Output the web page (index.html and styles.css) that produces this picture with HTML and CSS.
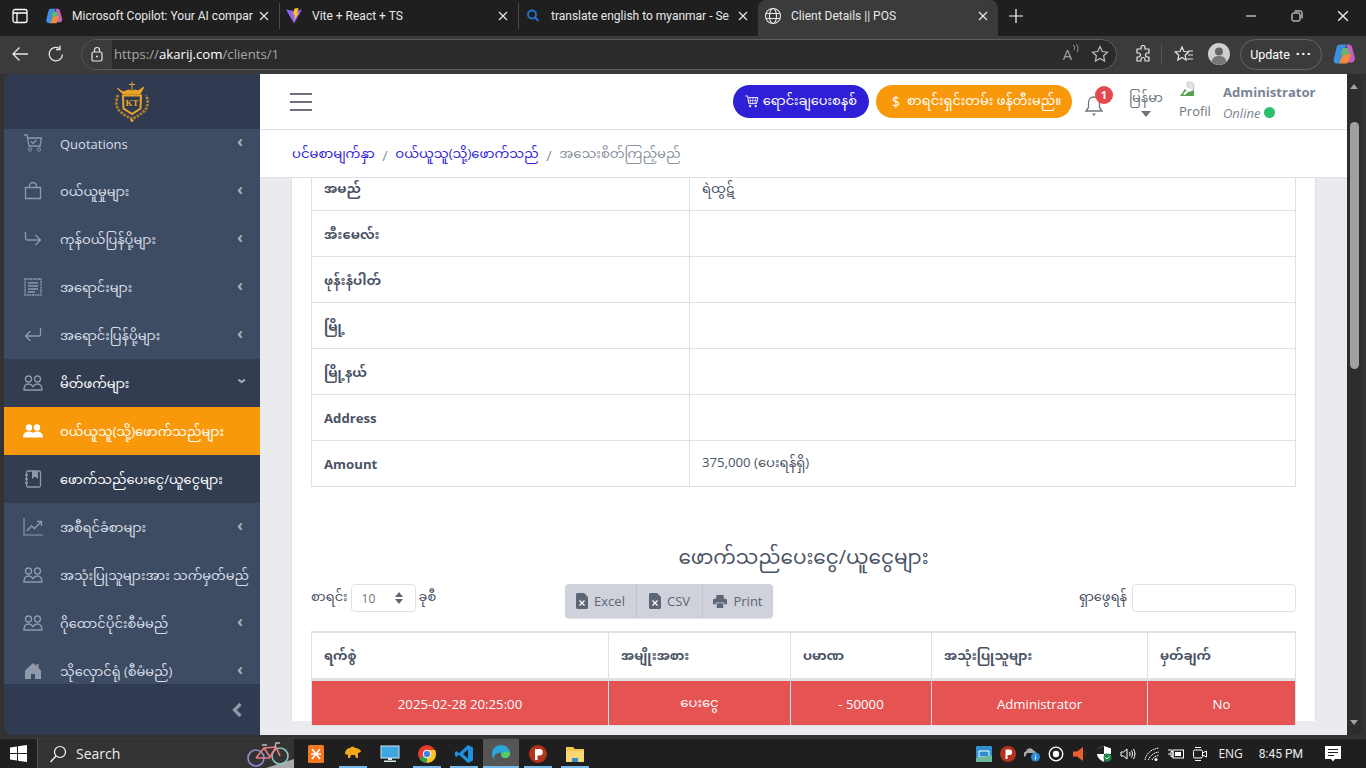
FILE: index.html
```html
<!DOCTYPE html>
<html lang="en">
<head>
    <meta charset="UTF-8">
    <title>Client Details || POS</title>
    <link rel="stylesheet" href="styles.css">
</head>

<body>
    <svg class="defs" width="0" height="0">
        <symbol id="ic-people" viewBox="0 0 20 16">
            <circle cx="5.5" cy="4" r="3" fill="none" stroke="currentColor" stroke-width="1.4"/>
            <circle cx="14.5" cy="4" r="3" fill="none" stroke="currentColor" stroke-width="1.4"/>
            <path d="M1 15c0-4 2-6 4.5-6S9 10 10 11.500C11 10 12 9 14.500 9S19 11 19 15z" fill="none" stroke="currentColor" stroke-width="1.4"/>
        </symbol>
        <symbol id="ic-close" viewBox="0 0 10 10">
            <path d="M1 1l8 8M9 1l-8 8" fill="none" stroke="currentColor" stroke-width="1.2"/>
        </symbol>
        <symbol id="ic-copilot" viewBox="0 0 20 20">
            <path d="M6 2h6l-3 9-2 7H4C2 18 1 16 1.500 14L4 4c.3-1.200 1-2 2-2z" fill="#3b8fe0"/>
            <path d="M12 2h2c1.500 0 2.300 1 2.600 2l2.400 9c.4 2-.6 4-2.600 4h-3l2-6-2-1z" fill="#c85fc0"/>
            <path d="M6 18l3-8h7l-2 6c-.4 1.200-1.200 2-2.500 2z" fill="#f08a3c"/>
            <path d="M7 11l2-6h4l2 5z" fill="#63b46c"/>
        </symbol>
        <symbol id="ic-file" viewBox="0 0 12 16">
            <path d="M0 1.500C0 .7.700 0 1.500 0H8l4 4v10.500c0 .8-.7 1.500-1.500 1.500h-9C.7 16 0 15.300 0 14.500z" fill="currentColor"/>
            <path d="M3.500 7.500l5 5M8.500 7.500l-5 5" stroke="#fff" stroke-width="1.200"/>
        </symbol>
    </svg>

    <div class="tab-strip">
        <svg class="strip-toggle" width="16" height="16" viewBox="0 0 16 16"><rect x="1" y="1.500" width="14" height="13" rx="2" fill="none" stroke="#fff" stroke-width="1.300"/><path d="M1 5h14M5 5v9" stroke="#fff" stroke-width="1.300"/></svg>
        <div class="tab tab-sep">
            <svg class="tab-icon" width="18" height="18"><use href="#ic-copilot"/></svg>
            <span class="tab-title">Microsoft Copilot: Your AI compar</span>
            <svg class="tab-close" width="10" height="10"><use href="#ic-close"/></svg>
        </div>
        <div class="tab tab-sep">
            <svg class="tab-icon" width="18" height="18" viewBox="0 0 18 18"><path d="M1 2.500l8 14 8-14-8 1.500z" fill="#8f63f0"/><path d="M9.500 1.500l4-.5-1.500 5 2-.5-5 8 1-6-2 .5z" fill="#ffc517"/></svg>
            <span class="tab-title">Vite + React + TS</span>
            <svg class="tab-close" width="10" height="10"><use href="#ic-close"/></svg>
        </div>
        <div class="tab tab-narrow">
            <svg class="tab-icon" width="18" height="18" viewBox="0 0 18 18"><circle cx="8" cy="7.500" r="4" fill="none" stroke="#1f78d1" stroke-width="1.800"/><path d="M11 10.500l3.500 3.500" stroke="#1f78d1" stroke-width="1.800"/></svg>
            <span class="tab-title">translate english to myanmar - Se</span>
            <svg class="tab-close" width="10" height="10"><use href="#ic-close"/></svg>
        </div>
        <div class="tab tab-active">
            <svg class="tab-icon" width="18" height="18" viewBox="0 0 18 18"><g fill="none" stroke="#e6e6e6" stroke-width="1.100"><circle cx="9" cy="9" r="7.500"/><ellipse cx="9" cy="9" rx="3.500" ry="7.500"/><path d="M2 6.500h14M2 11.500h14"/></g></svg>
            <span class="tab-title">Client Details || POS</span>
            <svg class="tab-close" width="10" height="10"><use href="#ic-close"/></svg>
        </div>
        <svg class="new-tab" width="16" height="16" viewBox="0 0 16 16"><path d="M8 1v14M1 8h14" stroke="#fff" stroke-width="1.200"/></svg>
        <div class="win-buttons">
            <svg width="12" height="12" viewBox="0 0 12 12"><path d="M1 6h10" stroke="#fff"/></svg>
            <svg width="12" height="12" viewBox="0 0 12 12"><rect x="1" y="3" width="8" height="8" rx="1.500" fill="none" stroke="#fff"/><path d="M3.500 1H9.500C10.500 1 11 1.500 11 2.500V8.500" fill="none" stroke="#fff"/></svg>
            <svg width="12" height="12"><use href="#ic-close"/></svg>
        </div>
    </div>

    <div class="toolbar">
        <svg class="tool-back" width="18" height="18" viewBox="0 0 18 18"><path d="M17 9H2M8.500 2.500L2 9l6.500 6.500" fill="none" stroke="#e8e8e8" stroke-width="1.300"/></svg>
        <svg class="tool-reload" width="18" height="18" viewBox="0 0 18 18"><path d="M15.500 9.500A6.700 6.700 0 1 1 12.500 3.500" fill="none" stroke="#e8e8e8" stroke-width="1.300"/><path d="M13 .5v4H9" fill="none" stroke="#e8e8e8" stroke-width="1.300"/></svg>
        <div class="url-box">
            <span class="lock-wrap">
                <svg width="14" height="16" viewBox="0 0 14 16"><rect x="2" y="6" width="10" height="9" rx="1.500" fill="none" stroke="#e8e8e8" stroke-width="1.200"/><path d="M4.500 6V4a2.500 2.500 0 0 1 5 0v2" fill="none" stroke="#e8e8e8" stroke-width="1.200"/><circle cx="7" cy="10.500" r="1" fill="#e8e8e8"/></svg>
            </span>
            <span class="url-text">https://<b>akarij.com</b>/clients/1</span>
            <span class="url-read">A<svg width="7" height="10" viewBox="0 0 7 10"><path d="M1 1c2 1 2 3 1 5M4 0c2.500 2 2.500 5 1 8" fill="none" stroke="#9a9a9a"/></svg></span>
            <svg class="url-star" width="18" height="18" viewBox="0 0 18 18"><path d="M9 1.500l2.300 5 5.200.6-3.900 3.600 1 5.300L9 13.400 4.400 16l1-5.300L1.500 7.100l5.200-.6z" fill="none" stroke="#bdbdbd" stroke-width="1.200"/></svg>
        </div>
        <svg class="tool-ext" width="18" height="18" viewBox="0 0 18 18"><path d="M7 2.500a2 2 0 0 1 4 0V4h4v4h-1.500a2 2 0 0 0 0 4H15v4h-4v-1.500a2 2 0 0 0-4 0V16H3v-4h1.500a2 2 0 0 0 0-4H3V4h4z" fill="none" stroke="#e8e8e8" stroke-width="1.200" stroke-linejoin="round"/></svg>
        <span class="tool-sep"></span>
        <svg class="tool-favs" width="20" height="18" viewBox="0 0 20 18"><path d="M8 2l2 4.500 4.700.5-3.500 3.200.9 4.800L8 12.500 3.900 15l.9-4.800L1.300 7 6 6.500z" fill="none" stroke="#e8e8e8" stroke-width="1.200"/><path d="M14 6h5M14 10h5M13 14h6" stroke="#e8e8e8" stroke-width="1.200"/></svg>
        <svg class="tool-avatar" width="22" height="22" viewBox="0 0 22 22"><circle cx="11" cy="11" r="11" fill="#cfcfcf"/><circle cx="11" cy="8.500" r="4" fill="#666"/><path d="M3.500 19c1-5 4-6 7.500-6s6.500 1 7.500 6a11 11 0 0 1-15 0z" fill="#777"/></svg>
        <div class="update-pill">Update<span class="update-dots">···</span></div>
        <svg class="tool-copilot" width="24" height="24"><use href="#ic-copilot"/></svg>
    </div>

    <div class="window">
        <aside class="sidebar">
            <div class="brand">
                <svg width="36" height="42" viewBox="0 0 36 42">
                    <path d="M18 1v8M15 3.500h6M3 7l6 4 3-1 3-1 3 1 3-1 3 1 6-4-4 7H9z" fill="#eda425" stroke="#eda425"/>
                    <path d="M9 14.500h18l-.5 13L18 33l-8.500-5.500z" fill="#2f3a52" stroke="#eda425" stroke-width="2"/>
                    <text x="18" y="25" class="brand-text">KT</text>
                    <path d="M4 14c-3 7-2 14 4 18 3 2.500 6 4 10 6 4-2 7-3.500 10-6 6-4 7-11 4-18" fill="none" stroke="#b8822a" stroke-width="2.600" stroke-dasharray="2.500 1.200"/>
                    <circle cx="18" cy="39.500" r="1.500" fill="#eda425"/>
                </svg>
            </div>
            <nav class="side-nav">
                <ul class="nav-list">
                    <li class="nav-item">
                        <svg class="nav-icon" width="20" height="18" viewBox="0 0 20 18"><path d="M1 1h3l2 11h11l1.500-8H5" fill="none" stroke="currentColor" stroke-width="1.300"/><path d="M8 7.500l2 2 3.500-3.500" fill="none" stroke="currentColor" stroke-width="1.300"/><circle cx="7" cy="15.500" r="1.600" fill="none" stroke="currentColor"/><circle cx="16" cy="15.500" r="1.600" fill="none" stroke="currentColor"/></svg>
                        <span class="nav-label nav-label-en">Quotations</span><span class="nav-arrow">‹</span>
                    </li>
                    <li class="nav-item">
                        <svg class="nav-icon" width="18" height="18" viewBox="0 0 18 18"><path d="M1.500 5.500h15v11h-15z" fill="none" stroke="currentColor" stroke-width="1.300"/><path d="M5.500 5.500V4a3.500 3.500 0 0 1 7 0v1.500" fill="none" stroke="currentColor" stroke-width="1.300"/></svg>
                        <span class="nav-label">ဝယ်ယူမှုများ</span><span class="nav-arrow">‹</span>
                    </li>
                    <li class="nav-item">
                        <svg class="nav-icon" width="18" height="16" viewBox="0 0 18 16"><path d="M1.500 1v6.500c0 1 .5 1.500 1.500 1.500h13M11.500 4l5 5-5 5" fill="none" stroke="currentColor" stroke-width="1.300"/></svg>
                        <span class="nav-label">ကုန်ဝယ်ပြန်ပို့များ</span><span class="nav-arrow">‹</span>
                    </li>
                    <li class="nav-item">
                        <svg class="nav-icon" width="18" height="18" viewBox="0 0 18 18"><rect x="1" y="1" width="16" height="16" fill="none" stroke="currentColor" stroke-width="1.300" stroke-dasharray="2 .6"/><path d="M4 5h10M4 8h10M4 11h10M4 14h7" stroke="currentColor" stroke-width="1.400"/></svg>
                        <span class="nav-label">အရောင်းများ</span><span class="nav-arrow">‹</span>
                    </li>
                    <li class="nav-item">
                        <svg class="nav-icon" width="18" height="16" viewBox="0 0 18 16"><path d="M16.500 1v6.500c0 1-.5 1.500-1.500 1.500H2M6.500 4l-5 5 5 5" fill="none" stroke="currentColor" stroke-width="1.300"/></svg>
                        <span class="nav-label">အရောင်းပြန်ပို့များ</span><span class="nav-arrow">‹</span>
                    </li>
                    <li class="nav-item nav-open">
                        <svg class="nav-icon" width="20" height="16"><use href="#ic-people"/></svg>
                        <span class="nav-label">မိတ်ဖက်များ</span><span class="nav-arrow nav-arrow-down">‹</span>
                    </li>
                    <li class="nav-item nav-active">
                        <svg class="nav-icon" width="20" height="14" viewBox="0 0 20 14"><circle cx="6" cy="3.500" r="3.200" fill="#fff"/><circle cx="14" cy="3.500" r="3.200" fill="#fff"/><path d="M0 13.500c0-4 2.500-6 6-6 1.500 0 3 .5 4 1.500 1-1 2.500-1.500 4-1.500 3.500 0 6 2 6 6z" fill="#fff"/></svg>
                        <span class="nav-label">ဝယ်ယူသူ(သို့)ဖောက်သည်များ</span>
                    </li>
                    <li class="nav-item nav-open nav-sub">
                        <svg class="nav-icon" width="18" height="18" viewBox="0 0 18 18"><rect x="2.500" y="1" width="14" height="16" rx="1.500" fill="none" stroke="currentColor" stroke-width="1.300"/><path d="M8 1h6v8l-3-2.500L8 9z" fill="currentColor"/><path d="M1 5h3M1 9h3M1 13h3" stroke="currentColor" stroke-width="1.300"/></svg>
                        <span class="nav-label">ဖောက်သည်ပေးငွေ/ယူငွေများ</span>
                    </li>
                    <li class="nav-item">
                        <svg class="nav-icon" width="20" height="18" viewBox="0 0 20 18"><path d="M1 0v17h19" fill="none" stroke="currentColor" stroke-width="1.200"/><path d="M4 13l4.500-5 3 2.500L18 4M14 3.500h4.500V8" fill="none" stroke="currentColor" stroke-width="1.300"/></svg>
                        <span class="nav-label">အစီရင်ခံစာများ</span><span class="nav-arrow">‹</span>
                    </li>
                    <li class="nav-item">
                        <svg class="nav-icon" width="20" height="16"><use href="#ic-people"/></svg>
                        <span class="nav-label">အသုံးပြုသူများအား သက်မှတ်မည်</span>
                    </li>
                    <li class="nav-item">
                        <svg class="nav-icon" width="20" height="16"><use href="#ic-people"/></svg>
                        <span class="nav-label">ဂိုထောင်ပိုင်းစီမံမည်</span><span class="nav-arrow">‹</span>
                    </li>
                    <li class="nav-item">
                        <svg class="nav-icon" width="18" height="16" viewBox="0 0 18 16"><path d="M9 0L1 7.500v8.500h6v-5h4v5h6V7.500L14.500 5V1h-2v2z" fill="currentColor"/></svg>
                        <span class="nav-label">သိုလှောင်ရုံ (စီမံမည်)</span><span class="nav-arrow">‹</span>
                    </li>
                </ul>
            </nav>
            <div class="side-foot">
                <svg width="12" height="16" viewBox="0 0 12 16"><path d="M9.500 2L3.500 8l6 6" fill="none" stroke="#8e97a6" stroke-width="3.200"/></svg>
            </div>
        </aside>

        <main class="main">
            <header class="top-bar">
                <div class="burger"><span></span><span></span><span></span></div>
                <div class="top-right">
                    <a class="pill pill-blue">
                        <svg width="16" height="15" viewBox="0 0 16 15"><path d="M.5 1h2.500l1.500 9h9l1.500-7H4" fill="none" stroke="#fff" stroke-width="1.100"/><path d="M6 3v7M9 3v7M12 3v7M4 6.500h10" stroke="#fff" stroke-width=".7"/><circle cx="6" cy="13" r="1.300" fill="#fff"/><circle cx="12.500" cy="13" r="1.300" fill="#fff"/></svg>
                        ရောင်းချပေးစနစ်
                    </a>
                    <a class="pill pill-orange"><span class="dollar">$</span>စာရင်းရှင်းတမ်း ဖန်တီးမည်။</a>
                    <div class="bell">
                        <svg width="18" height="22" viewBox="0 0 18 22"><path d="M9 2c3.500 0 5.500 2.500 5.500 6v4.500L17 16H1l2.500-3.500V8C3.500 4.500 5.500 2 9 2z" fill="none" stroke="#6c757d" stroke-width="1.300"/><path d="M7 18.500h4L9 21z" fill="#6c757d"/></svg>
                        <span class="bell-badge">1</span>
                    </div>
                    <div class="lang">မြန်မာ<span class="lang-caret"></span></div>
                    <div class="profile-img">
                        <svg width="16" height="17" viewBox="0 0 16 17"><path d="M8 1h5l2 2v6L8 6z" fill="#dfe3e6" stroke="#b5bcc2" stroke-width=".6"/><path d="M1 15l5-7 4 3 5-2v6z" fill="#56a04f"/><path d="M4 13l6-6 2 1-6 6z" fill="#fff"/></svg>
                        <span class="profile-alt">Profil</span>
                    </div>
                    <div class="user-box">
                        <b class="user-name">Administrator</b>
                        <span class="user-status">Online<i class="online-dot"></i></span>
                    </div>
                </div>
            </header>
            <div class="crumbs">
                <a>ပင်မစာမျက်နှာ</a><span class="crumb-sep">/</span><a>ဝယ်ယူသူ(သို့)ဖောက်သည်</a><span class="crumb-sep">/</span><span class="crumb-now">အသေးစိတ်ကြည့်မည်</span>
            </div>
            <div class="content">
                <section class="card">
                    <table class="info-table">
                        <tr><th>အမည်</th><td>ရဲထွဋ်</td></tr>
                        <tr><th>အီးမေလ်း</th><td></td></tr>
                        <tr><th>ဖုန်းနံပါတ်</th><td></td></tr>
                        <tr><th>မြို့</th><td></td></tr>
                        <tr><th>မြို့နယ်</th><td></td></tr>
                        <tr class="row-en"><th>Address</th><td></td></tr>
                        <tr class="row-en"><th>Amount</th><td>375,000 (ပေးရန်ရှိ)</td></tr>
                    </table>

                    <h2 class="section-title">ဖောက်သည်ပေးငွေ/ယူငွေများ</h2>

                    <div class="dt-controls">
                        <div class="dt-length">
                            စာရင်း
                            <span class="dt-select">10
                                <svg width="8" height="12" viewBox="0 0 8 12"><path d="M4 0l4 5H0zM4 12L0 7h8z" fill="#5f6873"/></svg>
                            </span>
                            ခုစီ
                        </div>
                        <div class="dt-buttons">
                            <span class="dt-btn btn-excel"><svg width="12" height="16"><use href="#ic-file"/></svg>Excel</span>
                            <span class="dt-btn btn-csv"><svg width="12" height="16"><use href="#ic-file"/></svg>CSV</span>
                            <span class="dt-btn btn-print"><svg width="14" height="13" viewBox="0 0 15 14"><path d="M3.500 4V0h8v4zM0 5.500C0 4.700.7 4 1.500 4h12c.8 0 1.500.7 1.500 1.500V10h-3V8H3v2H0zM4 9h7v5H4z" fill="currentColor"/></svg>Print</span>
                        </div>
                        <div class="dt-search">ရှာဖွေရန်<span class="dt-input"></span></div>
                    </div>

                    <table class="tx-table">
                        <thead>
                            <tr>
                                <th class="col-date">ရက်စွဲ</th>
                                <th class="col-type">အမျိုးအစား</th>
                                <th class="col-amount">ပမာဏ</th>
                                <th class="col-user">အသုံးပြုသူများ</th>
                                <th>မှတ်ချက်</th>
                            </tr>
                        </thead>
                        <tbody>
                            <tr class="row-red">
                                <td>2025-02-28 20:25:00</td>
                                <td>ပေးငွေ</td>
                                <td>- 50000</td>
                                <td>Administrator</td>
                                <td>No</td>
                            </tr>
                        </tbody>
                    </table>
                </section>
            </div>
        </main>

        <div class="page-scroll">
            <span class="scroll-up"></span>
            <span class="scroll-thumb"></span>
            <span class="scroll-down"></span>
        </div>
    </div>

    <footer class="taskbar">
        <svg class="start" width="17" height="17" viewBox="0 0 17 17"><path d="M0 2.500L7 1.500v6.500H0zM8 1.300L17 0v8H8zM0 9h7v6.500L0 14.500zM8 9h9v8l-9-1.300z" fill="#fff"/></svg>
        <div class="task-search">
            <svg width="18" height="18" viewBox="0 0 18 18"><circle cx="11" cy="7" r="5.500" fill="none" stroke="#fff" stroke-width="1.200"/><path d="M7 11l-5.500 6" stroke="#fff" stroke-width="1.200"/></svg>
            <span>Search</span>
            <svg class="bike" width="50" height="27" viewBox="0 0 50 27">
                <path d="M22 27l28-9v9z" fill="#a9a9a9"/>
                <circle cx="12" cy="17" r="8" fill="none" stroke="#8c8fd0" stroke-width="1.600"/>
                <circle cx="36" cy="15" r="8" fill="none" stroke="#8cc8c0" stroke-width="1.600"/>
                <path d="M12 17l8-10 12-1 4 9M20 7l6 9 6-10M12 17h14" fill="none" stroke="#e87f86" stroke-width="1.600"/>
                <path d="M18 4h5M31 6l1-4h4" fill="none" stroke="#bbb" stroke-width="1.400"/>
            </svg>
        </div>
        <div class="task-apps">
            <span class="app"><svg width="16" height="18" viewBox="0 0 16 18"><rect width="16" height="18" rx="1.500" fill="#f5781f"/><path d="M4 4l8 10M12 4L4 14M3 9h10" stroke="#fff" stroke-width="1.600"/></svg></span>
            <span class="app app-on"><svg width="18" height="16" viewBox="0 0 18 16"><path d="M1 8c0-3 2-6 5-6 1-1.500 4-2 5 0 3 0 6 2 6 4l-3 1v5h-2l-1-3H7l-1 3H4V9z" fill="#f2a71c"/></svg></span>
            <span class="app"><svg width="20" height="18" viewBox="0 0 20 18"><rect x="1" y="1" width="18" height="12" fill="#3da8e0" stroke="#cfe8f5"/><path d="M8 13h4v2H8zM4 15.500h12V17H4z" fill="#d6e6ee"/></svg></span>
            <span class="app app-on"><svg width="18" height="18" viewBox="0 0 18 18"><circle cx="9" cy="9" r="9" fill="#e33b2e"/><path d="M9 9L1.500 13.500A9 9 0 0 0 9 18z" fill="#33a04f"/><path d="M9 9v9a9 9 0 0 0 8-13H9z" fill="#f9c41b"/><circle cx="9" cy="9" r="3.800" fill="#3f83ea" stroke="#fff"/></svg></span>
            <span class="app app-on"><svg width="18" height="18" viewBox="0 0 18 18"><path d="M13 0l5 2.500v13L13 18 4 9.800 1.500 12 0 11V7l1.500-1L4 8.200z" fill="#1f8fe0"/><path d="M13 4.500L8 9l5 4.500z" fill="#1e1e1e"/></svg></span>
            <span class="app app-on app-active"><svg width="20" height="20" viewBox="0 0 20 20"><path d="M10 1c5 0 9 3.500 9 8.500 0 2.500-2 4.500-5 4.500-2.500 0-4-1.500-4-3 0-1 .5-1.500 1-2-3-1-8 1-8 4.500C3 17 6 19 10 19 5 19 1 15 1 10S5 1 10 1z" fill="#29a7d8"/><path d="M19 9.500c0 2.500-2 4.500-5 4.500-2.500 0-4-1.500-4-3 0-1 .5-1.500 1-2 2-1 8-3 8 .5z" fill="#59c96a"/></svg></span>
            <span class="app app-on"><svg width="18" height="18" viewBox="0 0 18 18"><circle cx="9" cy="9" r="9" fill="#b5321f"/><path d="M6 15V4h4.500a3.200 3.200 0 0 1 0 6.500H8.500V15z" fill="#fff"/></svg></span>
            <span class="app app-on"><svg width="18" height="16" viewBox="0 0 18 16"><path d="M0 1h7l2 2h9v4H0z" fill="#f4c64e"/><rect y="5" width="18" height="11" fill="#f8d775"/><path d="M6 16v-4h6v4z" fill="#2f8fd0"/></svg></span>
        </div>
        <div class="tray">
            <svg width="16" height="16" viewBox="0 0 16 16"><rect width="16" height="16" rx="1" fill="#2f8fd0"/><path d="M3 5h10v6H3z" fill="none" stroke="#fff"/><path d="M0 12l16-3v7H0z" fill="#6fb8a0"/></svg>
            <svg width="16" height="16" viewBox="0 0 16 16"><circle cx="8" cy="8" r="8" fill="#b5321f"/><path d="M5.500 13V3.500h3.800a2.800 2.800 0 0 1 0 5.600H7.500V13z" fill="#fff"/></svg>
            <svg width="16" height="16" viewBox="0 0 16 16"><path d="M1 11a3 3 0 0 1 1-5.500 4 4 0 0 1 7.500-1A3 3 0 0 1 12 7H3z" fill="#aaa"/><circle cx="11.500" cy="11" r="4.500" fill="#2a8ad6"/><path d="M11.500 8.500v1M11.500 10.500v3" stroke="#fff"/></svg>
            <svg width="16" height="16" viewBox="0 0 16 16"><circle cx="8" cy="8" r="6.800" fill="none" stroke="#fff" stroke-width="1.300"/><circle cx="8" cy="8" r="3.200" fill="#fff"/></svg>
            <svg width="16" height="16" viewBox="0 0 16 16"><path d="M1 5.500h4L11 1v14L5 10.500H1z" fill="#e8622f"/><path d="M12.500 5c1.200 2 1.200 4 0 6" stroke="#5a2a20" fill="none"/></svg>
            <svg width="16" height="16" viewBox="0 0 16 16"><path d="M8 0l7 2.500v5c0 4-3 6.500-7 8.500-4-2-7-4.500-7-8.500v-5z" fill="#fff"/><path d="M8 0v8H1V2.500zM8 8h7c0 3-3 6.500-7 8z" fill="#222"/><circle cx="11.500" cy="11.500" r="4" fill="#1d8a4a"/><path d="M9.500 11.500l1.500 1.500 2.500-2.500" fill="none" stroke="#fff"/></svg>
            <svg width="16" height="16" viewBox="0 0 16 16"><path d="M1 6h2.500L7 3v10l-3.500-3H1z" fill="none" stroke="#fff"/><path d="M9.500 6c.7 1.200.7 2.800 0 4M11.500 4.500c1.300 2.300 1.300 4.700 0 7M13.500 3c1.900 3 1.900 7 0 10" fill="none" stroke="#fff"/></svg>
            <svg width="16" height="16" viewBox="0 0 16 16"><path d="M1 14C2 8 7 3 15 2M4.500 14c1-3.500 4-7 10.500-8M8 14c.8-2 3-4 7-4.500" fill="none" stroke="#fff" stroke-dasharray="1.500 .7"/><circle cx="12" cy="13.500" r="1.500" fill="#fff"/></svg>
            <svg width="16" height="16" viewBox="0 0 16 16"><rect x="5" y="4" width="10.500" height="8" fill="none" stroke="#fff"/><rect x="7" y="6" width="6" height="4" fill="#fff"/><path d="M0 8h3M3 5.500h2v5H3zM1 3v2M3 3v2" stroke="#fff" fill="none"/></svg>
            <svg width="16" height="16" viewBox="0 0 16 16"><rect x="1.500" y="4" width="9" height="8" rx="1.500" fill="none" stroke="#fff"/><path d="M10.500 7l4-2v6l-4-2M3 1.500h6M3 14.500h6" fill="none" stroke="#fff"/></svg>
        </div>
        <span class="tray-lang">ENG</span>
        <span class="tray-clock">8:45 PM</span>
        <svg class="tray-notes" width="16" height="16" viewBox="0 0 16 16"><path d="M0 0h16v13h-6l-2 2.500L6 13H0z" fill="#fff"/><path d="M3 3.500h10M3 6.500h10M3 9.500h6" stroke="#222"/></svg>
    </footer>
</body>
</html>
```

FILE: styles.css
```css
* {
    box-sizing: border-box;
}
html, body {
    height: 768px;
    overflow: hidden;
}
body {
    display: flex;
    flex-direction: column;
    margin: 0;
    background: #333;
    font-family: "Open Sans", "Noto Sans Myanmar", "Padauk", "Noto Sans", sans-serif;
    font-size: 13.2px;
    color: #495364;
}
.defs {
    position: absolute;
}

/* browser chrome */
.tab-strip {
    display: flex;
    align-items: center;
    flex: 0 0 36px;
    padding-left: 12px;
    background: #1f1f1f;
    color: #e8e8e8;
    font-family: Roboto, sans-serif;
    font-size: 12px;
}
.strip-toggle {
    margin: 0 12px 4px 0;
}
.tab {
    display: flex;
    align-items: center;
    width: 239px;
    height: 26px;
    margin-bottom: 4px;
    padding: 0 10px 0 5px;
}
.tab-sep {
    border-right: 1px solid #4a4a4a;
}
.tab:first-of-type {
    width: 240px;
}
.tab-active {
    width: 240px;
    height: 36px;
    margin-bottom: 0;
    padding: 0 10px 4px 6px;
    border-radius: 8px 8px 0 0;
    background: #3b3b3b;
}
.tab-icon {
    flex: none;
    margin-right: 9px;
}
.tab-title {
    flex: 1;
    overflow: hidden;
    white-space: nowrap;
}
.tab-close {
    flex: none;
    color: #e8e8e8;
    margin-left: 6px;
}
.new-tab {
    margin: 0 0 4px 10px;
}
.win-buttons {
    display: flex;
    gap: 34px;
    margin: 0 0 4px auto;
    padding-right: 17px;
}

.toolbar {
    display: flex;
    align-items: center;
    flex: 0 0 38px;
    padding: 0 10px 2px 11px;
    background: #3b3b3b;
    color: #e8e8e8;
}
.tool-reload {
    margin-left: 18px;
}
.url-box {
    display: flex;
    align-items: center;
    width: 1038px;
    height: 31px;
    margin-left: 16px;
    border: 1px solid #5d5d5d;
    border-radius: 16px;
    background: #2b2b2b;
}
.lock-wrap {
    display: flex;
    align-items: center;
    justify-content: center;
    width: 30px;
    height: 29px;
    border-radius: 15px 0 0 15px;
    background: #3b3b3b;
}
.url-text {
    flex: 1;
    margin-left: 2px;
    color: #a8a8a8;
    font-size: 13.2px;
}
.url-text b {
    color: #fff;
    font-weight: 400;
}
.url-read {
    display: flex;
    color: #a0a0a0;
    font-size: 15px;
    margin-right: 12px;
}
.url-star {
    margin-right: 7px;
}
.tool-ext {
    margin-left: 17px;
}
.tool-sep {
    width: 1px;
    height: 20px;
    margin: 0 12px 0 9px;
    background: #555;
}
.tool-avatar {
    margin-left: 14px;
}
.update-pill {
    display: flex;
    align-items: center;
    justify-content: space-between;
    width: 82px;
    height: 31px;
    margin-left: 10px;
    padding: 0 9px;
    border: 1px solid #666;
    border-radius: 16px;
    color: #fff;
    font-family: Roboto, sans-serif;
    font-size: 12.5px;
}
.update-dots {
    font-size: 15px;
    font-weight: 700;
    line-height: 1;
    letter-spacing: 1px;
}
.tool-copilot {
    margin-left: 10px;
}

/* page window */
.window {
    display: flex;
    flex: 0 0 661px;
    margin: 0 4px;
    overflow: hidden;
    border-radius: 8px;
    background: #2d2d2d;
}
.sidebar {
    display: flex;
    flex-direction: column;
    flex: 0 0 256px;
    min-width: 0;
    background: #303b52;
}
.brand {
    display: flex;
    align-items: center;
    justify-content: center;
    flex: 0 0 55px;
}
.brand-text {
    font-family: "Liberation Serif", serif;
    font-size: 9px;
    font-weight: 700;
    fill: #eda425;
    text-anchor: middle;
}
.side-nav {
    flex: 0 0 555px;
    overflow: hidden;
    background: #3d4b63;
}
.nav-list {
    list-style: none;
    margin: -10px 0 0;
    padding: 0;
}
.nav-item {
    display: flex;
    align-items: center;
    height: 48px;
    padding: 0 17px 0 19px;
    color: #d9dee6;
    white-space: nowrap;
}
.nav-icon {
    flex: none;
    width: 20px;
    color: #8f99a9;
}
.nav-label {
    flex: 1;
    margin-left: 17px;
    padding-top: 4px;
    font-size: 13px;
}
.nav-label-en {
    padding-top: 2px;
}
.nav-arrow {
    color: #a5adb9;
    font-size: 16px;
    font-weight: 700;
    margin-top: -4px;
}
.nav-arrow-down {
    transform: rotate(-90deg);
}
.nav-open {
    background: #323d52;
    color: #fff;
}
.nav-active {
    background: #f8990c;
    color: #fff;
}
.side-foot {
    display: flex;
    align-items: center;
    justify-content: flex-end;
    flex: 1;
    padding-right: 17px;
}

.main {
    display: flex;
    flex-direction: column;
    flex: 1;
    min-width: 0;
    background: #e9ebee;
}
.top-bar {
    display: flex;
    align-items: center;
    flex: 0 0 56px;
    padding: 0 31px 0 30px;
    background: #fff;
    border-bottom: 1px solid #dee2e6;
}
.burger {
    display: flex;
    flex-direction: column;
    gap: 6px;
    width: 22px;
}
.burger span {
    height: 2px;
    background: #6c757d;
}
.top-right {
    display: flex;
    align-items: center;
    margin-left: auto;
}
.pill {
    display: flex;
    align-items: center;
    gap: 4px;
    height: 33px;
    padding: 0 12px;
    border-radius: 17px;
    color: #fff;
    font-size: 13px;
    white-space: nowrap;
}
.pill-blue {
    width: 136px;
    margin-right: 7px;
    background: #2f1fd6;
}
.pill-orange {
    width: 196px;
    background: #f8990c;
}
.dollar {
    margin: 0 3px 0 4px;
    font-size: 14px;
}
.bell {
    display: flex;
    position: relative;
    margin: 8px 0 0 13px;
}
.bell-badge {
    position: absolute;
    top: -9px;
    left: 10px;
    width: 18px;
    height: 18px;
    border-radius: 50%;
    background: #e5484d;
    color: #fff;
    font-size: 11px;
    font-weight: 700;
    line-height: 18px;
    text-align: center;
}
.lang {
    display: flex;
    flex-direction: column;
    align-items: center;
    width: 34px;
    margin-left: 26px;
    font-size: 13px;
    line-height: 20px;
    color: #6c757d;
    white-space: nowrap;
}
.lang-caret {
    margin-top: 4px;
    border: 5px solid transparent;
    border-top: 6px solid #6c757d;
    border-bottom: 0;
}
.profile-img {
    display: flex;
    flex-direction: column;
    width: 33px;
    height: 42px;
    margin-left: 16px;
    overflow: hidden;
    color: #6c757d;
    font-size: 13px;
    line-height: 18px;
}
.profile-alt {
    margin-top: 4px;
}
.user-box {
    display: flex;
    flex-direction: column;
    width: 93px;
    margin-left: 11px;
    color: #7a8494;
}
.user-name {
    font-size: 13.1px;
    line-height: 21px;
}
.user-status {
    display: flex;
    align-items: center;
    margin-top: 1px;
    font-size: 13px;
    font-style: italic;
}
.online-dot {
    width: 11px;
    height: 11px;
    margin-left: 4px;
    border-radius: 50%;
    background: #2dbd6e;
}
.crumbs {
    display: flex;
    align-items: center;
    gap: 7.5px;
    flex: 0 0 48px;
    padding: 3px 0 0 32px;
    background: #fff;
    border-bottom: 1px solid #dee2e6;
    font-size: 13.2px;
    white-space: nowrap;
}
.crumbs a {
    color: #2f1fd6;
}
.crumb-sep, .crumb-now {
    color: #8a93a0;
}
.crumb-sep {
    font-size: 15px;
}

.content {
    flex: 1;
    overflow: hidden;
    padding: 0 31px;
}
.card {
    height: 100%;
    padding: 0 19px;
    background: #fff;
    border: solid #dee2e6;
    border-width: 0 1px;
}
table {
    width: 100%;
    border-collapse: collapse;
    table-layout: fixed;
}
th, td {
    border: 1px solid #dee2e6;
    padding: 0 12px;
    text-align: left;
}
.info-table {
    margin-top: -14px;
}
.info-table th {
    width: 378px;
}
.info-table tr {
    height: 46px;
}
.info-table th, .info-table td {
    padding-top: 4px;
}
.info-table .row-en th, .info-table .row-en td {
    padding-top: 0;
}
.section-title {
    margin: 50px 0 7px;
    font-size: 20px;
    font-weight: 400;
    line-height: 40px;
    text-align: center;
    color: #495364;
}
.dt-controls {
    display: flex;
    align-items: flex-start;
    height: 47px;
}
.dt-length {
    display: flex;
    align-items: center;
    gap: 3px;
    width: 254px;
    height: 28px;
    font-size: 13px;
}
.dt-select {
    display: flex;
    align-items: center;
    justify-content: space-between;
    width: 65px;
    height: 28px;
    padding: 0 12px 0 10px;
    border: 1px solid #dee2e6;
    border-radius: 4px;
    font-size: 12px;
    color: #6c757d;
}
.dt-buttons {
    display: flex;
    height: 34px;
    background: #cfd2da;
    border-radius: 4px;
    box-shadow: 0 1px 1px rgba(0, 0, 0, 0.12);
    color: #5c6675;
    font-size: 13px;
}
.dt-btn {
    display: flex;
    align-items: center;
    justify-content: center;
    gap: 6px;
    border-left: 1px solid #bfc3cc;
}
.btn-excel {
    width: 71px;
    border-left: 0;
}
.btn-csv {
    width: 66px;
}
.btn-print {
    width: 71px;
}
.dt-search {
    display: flex;
    align-items: center;
    gap: 5px;
    height: 28px;
    margin-left: auto;
    font-size: 13px;
}
.dt-input {
    width: 164px;
    height: 28px;
    border: 1px solid #dee2e6;
    border-radius: 4px;
}
.tx-table {
    border-top: 2px solid #dee2e6;
}
.tx-table th {
    height: 47px;
    padding-top: 4px;
    border-bottom: 3px solid #dee2e6;
    font-size: 13px;
}
.col-date {
    width: 297px;
}
.col-type {
    width: 182px;
}
.col-amount {
    width: 141px;
}
.col-user {
    width: 216px;
}
.row-red td {
    height: 46px;
    padding-top: 2px;
    background: #e55353;
    color: #fff;
    text-align: center;
}

.page-scroll {
    position: relative;
    flex: 0 0 15px;
    background: #2d2d2d;
}
.scroll-up, .scroll-down {
    position: absolute;
    left: 3px;
    border: 4.500px solid transparent;
}
.scroll-up {
    top: 10px;
    border-bottom: 5px solid #a3a3a3;
    border-top: 0;
}
.scroll-down {
    bottom: 10px;
    border-top: 5px solid #a3a3a3;
    border-bottom: 0;
}
.scroll-thumb {
    position: absolute;
    top: 48px;
    left: 3px;
    width: 9px;
    height: 247px;
    border-radius: 5px;
    background: #a0a0a0;
}

/* windows taskbar */
.taskbar {
    display: flex;
    align-items: center;
    flex: 0 0 30px;
    margin-top: 3px;
    background: #1f1f1f;
    border-top: 1px solid #3a3a3a;
    color: #eee;
}
.start {
    margin-left: 10px;
}
.task-search {
    display: flex;
    align-items: center;
    gap: 9px;
    position: relative;
    width: 257px;
    height: 29px;
    margin-left: 10px;
    padding-left: 11px;
    background: #333;
    border: 1px solid #555;
    border-width: 0 0 0 1px;
    overflow: hidden;
    font-size: 14px;
}
.bike {
    position: absolute;
    right: 0;
    bottom: 0;
}
.task-apps {
    display: flex;
    margin-left: 3px;
}
.app {
    display: flex;
    align-items: center;
    justify-content: center;
    position: relative;
    width: 36px;
    height: 29px;
    margin-left: 1px;
}
.app-on::after {
    content: "";
    position: absolute;
    left: 4px;
    right: 4px;
    bottom: 0;
    height: 2px;
    background: #76b9ed;
}
.app-active {
    background: #555;
}
.app-active::after {
    left: 0;
    right: 0;
}
.tray {
    display: flex;
    gap: 8px;
    margin-left: auto;
}
.tray-lang {
    margin-left: 10px;
    font-size: 12px;
}
.tray-clock {
    margin-left: 16px;
    font-family: Roboto, sans-serif;
    font-size: 12px;
}
.tray-notes {
    margin: 0 25px 0 22px;
}
```
